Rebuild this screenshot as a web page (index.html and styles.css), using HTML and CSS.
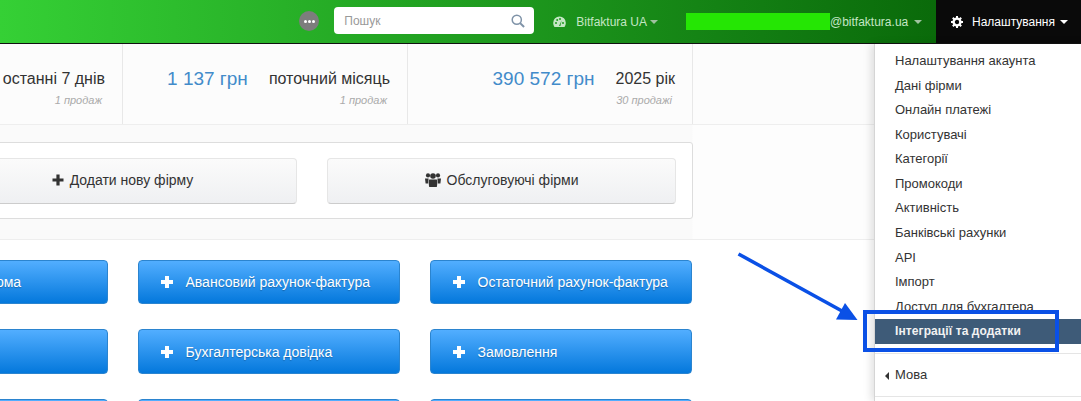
FILE: index.html
```html
<!DOCTYPE html>
<html lang="en">
<head>
    <meta charset="UTF-8">
    <title>Bitfaktura</title>
    <link rel="stylesheet" href="styles.css">
</head>
<body>
    <header class="topbar">
        <span class="dots-badge"><span></span><span></span><span></span></span>
        <div class="search-box">
            <span>Пошук</span>
            <svg width="14" height="14" viewBox="0 0 15 15"><circle cx="6.2" cy="6.2" r="4.9" fill="none" stroke="#7f93a8" stroke-width="1.6"/><path d="M9.8 9.8 L14 14" stroke="#7f93a8" stroke-width="2.2"/></svg>
        </div>
        <div class="nav-item company">
            <svg width="13" height="12" viewBox="0 0 13 12"><path d="M6.5 0.5A6.3 6.3 0 0 0 0.2 6.8C0.2 8.4 0.7 9.8 1.5 11H11.5C12.3 9.8 12.8 8.4 12.8 6.8A6.3 6.3 0 0 0 6.5 0.5Z" fill="#c4e6c4"/><circle cx="3" cy="7" r="1" fill="#1f9a1f"/><circle cx="4.2" cy="4" r="1" fill="#1f9a1f"/><circle cx="7" cy="3" r="1" fill="#1f9a1f"/><circle cx="10" cy="7" r="1" fill="#1f9a1f"/><path d="M6 10 L8.6 4.6 L7.4 10Z" fill="#1f9a1f"/></svg>
            <span>Bitfaktura UA</span>
            <i class="caret"></i>
        </div>
        <div class="nav-item account">
            <span class="redacted"></span>
            <span>@bitfaktura.ua</span>
            <i class="caret"></i>
        </div>
        <div class="nav-item settings">
            <svg width="12" height="12" viewBox="0 0 12 12"><circle cx="6" cy="6" r="3.4" fill="none" stroke="#fff" stroke-width="2.4"/><path d="M6 0V2.5M6 9.5V12M0 6H2.5M9.5 6H12M1.8 1.8L3.5 3.5M8.5 8.5L10.2 10.2M1.8 10.2L3.5 8.5M8.5 3.5L10.2 1.8" stroke="#fff" stroke-width="2"/></svg>
            <span>Налаштування</span>
            <i class="caret"></i>
        </div>
    </header>

    <section class="stats">
        <div class="stat">
            <div class="stat-row"><span class="stat-label">останні 7 днів</span></div>
            <div class="stat-note">1 продаж</div>
        </div>
        <div class="stat">
            <div class="stat-row"><span class="stat-sum">1 137 грн</span><span class="stat-label">поточний місяць</span></div>
            <div class="stat-note">1 продаж</div>
        </div>
        <div class="stat">
            <div class="stat-row"><span class="stat-sum">390 572 грн</span><span class="stat-label">2025 рік</span></div>
            <div class="stat-note">30 продажі</div>
        </div>
    </section>

    <section class="firm-band">
        <div class="firm-panel">
            <div class="btn-light">
                <svg width="12" height="12" viewBox="0 0 12 12"><path d="M4.4 0.5H7.6V4.4H11.5V7.6H7.6V11.5H4.4V7.6H0.5V4.4H4.4Z" fill="#333"/></svg>
                <span>Додати нову фірму</span>
            </div>
            <div class="btn-light">
                <svg width="16" height="14" viewBox="0 0 16 14"><circle cx="3" cy="2.4" r="2.1" fill="#333"/><circle cx="13" cy="2.4" r="2.1" fill="#333"/><circle cx="8" cy="3" r="2.8" fill="#333"/><path d="M0 5.4H3.6L3.2 10.4H0.6ZM16 5.4H12.4L12.8 10.4H15.4Z" fill="#333"/><path d="M4.2 6.6H11.8C12.4 8.6 12.4 11.2 11.8 14H4.2C3.6 11.2 3.6 8.6 4.2 6.6Z" fill="#333"/></svg>
                <span>Обслуговуючі фірми</span>
            </div>
        </div>
    </section>

    <section class="doc-grid">
        <div class="btn-blue btn-first"><i class="plus"></i><span>Рахунок-проформа</span></div>
        <div class="btn-blue"><i class="plus"></i><span>Авансовий рахунок-фактура</span></div>
        <div class="btn-blue"><i class="plus"></i><span>Остаточний рахунок-фактура</span></div>
        <div class="btn-blue"><i class="plus"></i></div>
        <div class="btn-blue"><i class="plus"></i><span>Бухгалтерська довідка</span></div>
        <div class="btn-blue"><i class="plus"></i><span>Замовлення</span></div>
        <div class="btn-blue"></div>
        <div class="btn-blue"></div>
        <div class="btn-blue"></div>
    </section>

    <ul class="settings-menu">
        <li>Налаштування акаунта</li>
        <li>Дані фірми</li>
        <li>Онлайн платежі</li>
        <li>Користувачі</li>
        <li>Категорії</li>
        <li>Промокоди</li>
        <li>Активність</li>
        <li>Банківські рахунки</li>
        <li>API</li>
        <li>Імпорт</li>
        <li>Доступ для бухгалтера</li>
        <li class="active">Інтеграції та додатки</li>
        <li class="divider"></li>
        <li class="has-sub">Мова</li>
        <li class="divider"></li>
    </ul>

    <svg class="annotation" width="1081" height="401" viewBox="0 0 1081 401">
        <path d="M738.5 254 L842 311" stroke="#0a50e6" stroke-width="3.6" fill="none"/>
        <path d="M845 303 L836 319.5 L857.5 320Z" fill="#0a50e6"/>
        <rect x="865" y="312" width="192" height="38" fill="none" stroke="#0a50e6" stroke-width="4"/>
    </svg>
</body>
</html>
```

FILE: styles.css
```css
* {
    box-sizing: border-box;
}

html, body {
    height: 401px;
}

body {
    margin: 0;
    position: relative;
    overflow: hidden;
    background: #fff;
    color: #333;
    font-family: 'Liberation Sans', Arial, sans-serif;
    font-size: 14px;
}

.topbar {
    display: flex;
    align-items: center;
    justify-content: flex-end;
    height: 44px;
    border-bottom: 1px solid #111;
    background: linear-gradient(to right, #35d035, #0a6a0a 936px);
    font-size: 12px;
}

.dots-badge {
    display: flex;
    align-items: center;
    justify-content: center;
    gap: 1px;
    width: 20px;
    height: 20px;
    margin-right: 15px;
    margin-bottom: 1px;
    border-radius: 50%;
    background: #7d7d7d;
}

.dots-badge span {
    width: 3px;
    height: 3px;
    border-radius: 50%;
    background: #fff;
}

.search-box {
    display: flex;
    align-items: center;
    justify-content: space-between;
    width: 200px;
    height: 27px;
    margin-right: 19px;
    margin-bottom: 2px;
    padding: 0 9px 0 10px;
    border-radius: 4px;
    background: #fff;
    color: #999;
}

.nav-item {
    display: flex;
    align-items: center;
    height: 43px;
    color: #c4e6c4;
}

.company {
    gap: 10px;
    margin-right: 28px;
}

.company .caret {
    margin-left: -7px;
}

.redacted {
    width: 144px;
    height: 17px;
    background: #25e604;
}

.account {
    width: 250px;
}

.account .caret {
    margin-left: 6px;
}

.settings {
    width: 145px;
    padding-left: 15px;
    background: #0a0a0a;
    color: #fff;
}

.settings svg {
    margin-right: 9px;
}

.settings .caret {
    margin-left: 5px;
    border-top-color: #fff;
}

.caret {
    width: 0;
    height: 0;
    border-top: 4px solid #9fc29f;
    border-left: 4px solid transparent;
    border-right: 4px solid transparent;
}

.stats {
    display: flex;
    height: 81px;
    margin-left: -162px;
    border-bottom: 1px solid #eee;
    background: #fcfcfc;
}

.stat {
    width: 285px;
    height: 80px;
    padding: 23px 17px 0 0;
    border-right: 1px solid #e8e8e8;
    text-align: right;
}

.stat-row {
    display: flex;
    align-items: center;
    justify-content: flex-end;
    gap: 21px;
    height: 24px;
}

.stat-sum {
    color: #428bca;
    font-size: 19px;
}

.stat-label {
    color: #333;
    font-size: 16px;
}

.stat-note {
    margin-top: 3px;
    padding-right: 3px;
    color: #aaa;
    font-size: 11px;
    font-style: italic;
}

.firm-band {
    height: 115px;
    padding-top: 17px;
    border-bottom: 1px solid #eee;
    background: linear-gradient(to right, #fafafa 692px, #fdfdfd 693px);
}

.firm-panel {
    display: flex;
    gap: 30px;
    width: 761px;
    height: 77px;
    margin-left: -68px;
    padding: 15px 16px 0 15px;
    border: 1px solid #ddd;
    border-radius: 3px;
    background: #fff;
}

.btn-light {
    display: flex;
    align-items: center;
    justify-content: center;
    gap: 6px;
    width: 349px;
    height: 46px;
    padding-bottom: 2px;
    border: 1px solid #e6e6e6;
    border-bottom-color: #ccc;
    border-radius: 4px;
    background: linear-gradient(to bottom, #fbfbfb, #eff0f2);
    font-size: 14px;
}

.doc-grid {
    display: grid;
    grid-template-columns: repeat(3, 262px);
    grid-template-rows: 44px 45px 45px;
    gap: 25px 30px;
    margin-left: -154px;
    padding-top: 20px;
}

.btn-blue {
    display: flex;
    align-items: center;
    gap: 13px;
    padding-left: 21.5px;
    border: 1px solid #2b84cf;
    border-radius: 4px;
    background: linear-gradient(to bottom, #52aeff, #0478dc);
    color: #fff;
    font-size: 14px;
    text-shadow: 0 1px 1px rgba(0, 0, 0, 0.25);
}

.btn-first {
    gap: 16px;
}

.plus {
    width: 12px;
    height: 12px;
    background:
        linear-gradient(#fff, #fff) center / 100% 4px no-repeat,
        linear-gradient(#fff, #fff) center / 4px 100% no-repeat;
}

.settings-menu {
    position: absolute;
    top: 44px;
    left: 874px;
    width: 220px;
    height: 357px;
    margin: 0;
    padding: 5px 0 0;
    border-left: 1px solid #d5d5d5;
    background: #fff;
    box-shadow: -3px 0 8px rgba(0, 0, 0, 0.12);
    color: #333;
    font-size: 13px;
    line-height: 18.57px;
    list-style: none;
}

.settings-menu li {
    padding: 3px 20px;
}

.settings-menu .active {
    background: #3e5b78;
    color: #f2f2f2;
    font-size: 12px;
    font-weight: bold;
    letter-spacing: 0.1px;
}

.settings-menu .divider {
    height: 1px;
    margin: 9px 0;
    padding: 0;
    background: #e5e5e5;
}

.settings-menu .has-sub {
    position: relative;
}

.has-sub::before {
    content: "";
    position: absolute;
    top: 9px;
    left: 10px;
    border-top: 4px solid transparent;
    border-bottom: 4px solid transparent;
    border-right: 4px solid #333;
}

.annotation {
    position: absolute;
    top: 0;
    left: 0;
    pointer-events: none;
}
```
